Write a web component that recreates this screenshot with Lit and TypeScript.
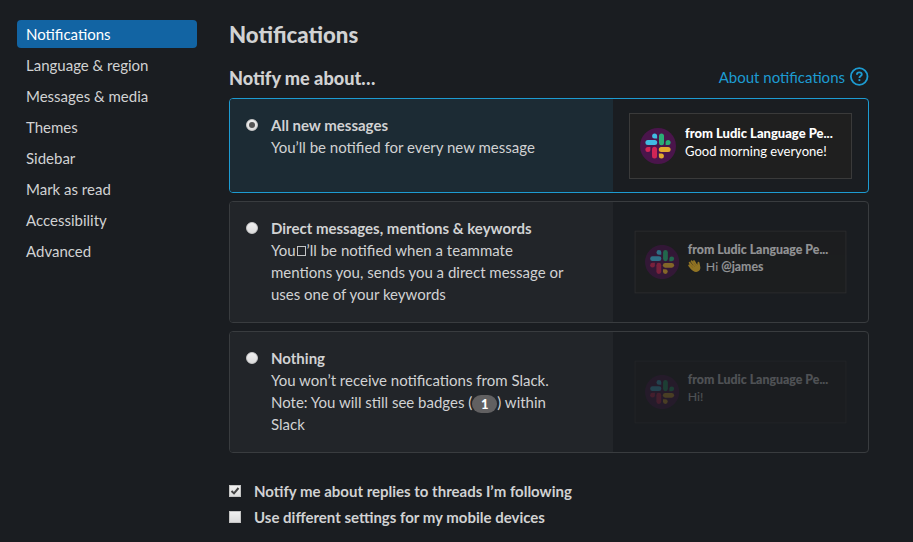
import { LitElement, html, css, svg, nothing } from "lit";
import { customElement, property } from "lit/decorators.js";
import { classMap } from "lit/directives/class-map.js";

const NAV = [
  "Notifications",
  "Language & region",
  "Messages & media",
  "Themes",
  "Sidebar",
  "Mark as read",
  "Accessibility",
  "Advanced",
];

const hashLobe = (turn: number, color: string) => svg`
  <g transform="rotate(${turn} 18 18)" fill=${color}>
    <rect x="19" y="5.4" width="5" height="11.8" rx="2.5"></rect>
    <path d="M25.6 17.1v-2.5a2.5 2.5 0 1 1 2.5 2.5z"></path>
  </g>`;

const logo = html`
  <svg class="logo" viewBox="0 0 36 36" aria-hidden="true">
    <circle cx="18" cy="18" r="18" fill="#4a154b"></circle>
    ${hashLobe(0, "#2bac76")}${hashLobe(90, "#e3aa2f")}
    ${hashLobe(180, "#d02556")}${hashLobe(270, "#41bbe2")}
  </svg>`;

const wave = html`
  <svg class="wave" viewBox="0 0 14 14" aria-hidden="true">
    <path d="M4 9.8 1.5 6.6M5.2 8 2 3.8M7 6.6 4 2.2M8.6 5.8 6.6 2.2" stroke="#ffc526" stroke-width="2.1" stroke-linecap="round"></path>
    <path d="M3 8 8.3 4.2 10 6 10.3 3.6c.2-1.2 1.8-1.1 2 .1l.9 4.6c.4 2.8-1.6 5.2-4.4 5.2-2.3 0-4-1.2-5.2-3z" fill="#ffc526"></path>
    <path d="M3.2 6.4 5.2 8.8M4.6 4.9 7.2 7.8M6.4 3.8 8.8 6.8" stroke="#c98a10" stroke-width=".5" stroke-linecap="round"></path>
  </svg>`;

@customElement("toast-preview")
class ToastPreview extends LitElement {
  static styles = css`
    :host { display: block; }
    .toast {
      box-sizing: border-box; width: 223px; height: 66px; display: flex; gap: 9px;
      padding: 10px; border: 1px solid #3a3a3a; background: #1f1f1f; color: #fff;
    }
    .logo { width: 36px; height: 36px; flex: none; margin-top: 4px; }
    .body { font-size: 13px; line-height: 18px; white-space: nowrap; }
    .from { font-weight: 900; }
    .body ::slotted(*) { display: block; }
  `;
  render() {
    return html`<div class="toast">${logo}
      <div class="body"><div class="from">from Ludic Language Pe...</div><slot></slot></div>
    </div>`;
  }
}

@customElement("choice-card")
class ChoiceCard extends LitElement {
  @property() heading = "";
  @property({ type: Boolean }) checked = false;
  static styles = css`
    :host { display: block; }
    .card {
      box-sizing: border-box; display: grid; grid-template-columns: 383px 1fr;
      min-height: 122px; border: 1px solid #393c3f; border-radius: 4px; overflow: hidden;
    }
    .card.on { min-height: 95px; border-color: #1d9bd1; }
    .main { display: flex; gap: 13px; padding: 15px 45px 16px 16px; background: #222529; }
    .on .main { background: #1c2b34; }
    .radio {
      box-sizing: border-box; flex: none; width: 12px; height: 12px; margin-top: 5px; border-radius: 50%;
      background: linear-gradient(#f0f0f0, #dcdcdc); border: 1px solid #c9c9c9;
      display: grid; place-items: center;
    }
    .dot { width: 6px; height: 6px; border-radius: 50%; background: #555; }
    .title { font-weight: 700; }
    .side { display: grid; place-items: center; }
  `;
  render() {
    return html`<div class=${classMap({ card: true, on: this.checked })}>
      <div class="main">
        <div class="radio">${this.checked ? html`<div class="dot"></div>` : nothing}</div>
        <div><div class="title">${this.heading}</div><slot></slot></div>
      </div>
      <div class="side"><slot name="preview"></slot></div>
    </div>`;
  }
}

@customElement("app-root")
class AppRoot extends LitElement {
  static styles = css`
    :host {
      box-sizing: border-box; display: flex; gap: 32px; height: 542px; overflow: hidden;
      padding: 20px 44px 0 17px; background: #1a1d21; color: #d1d2d3;
      font: 15px/22px Lato, "Liberation Sans", sans-serif;
    }
    nav { width: 180px; display: flex; flex-direction: column; gap: 3px; }
    .item { height: 28px; line-height: 29px; padding-left: 9px; border-radius: 4px; }
    .item.active { background: #1264a3; color: #fff; }
    main { width: 640px; }
    h1 { margin: 0; font-size: 22.2px; line-height: 30px; font-weight: 900; }
    .bar { display: flex; justify-content: space-between; align-items: center; height: 28px; margin-top: 13px; }
    h2 { margin: 2px 0 0; font-size: 18.1px; line-height: 26px; font-weight: 900; }
    .about { display: flex; align-items: center; gap: 5px; color: #1d9bd1; margin-top: -1px; }
    .help { width: 19px; height: 19px; }
    .cards { display: flex; flex-direction: column; gap: 8px; margin-top: 7px; }
    .missing { display: inline-block; box-sizing: border-box; width: 9px; height: 10px; border: 1px solid #c4c5c6; margin: 0 1px; }
    .badge {
      display: inline-block; width: 25px; height: 18px; border-radius: 9px; background: #616061; color: #fff;
      font-size: 13px; line-height: 18px; font-weight: 900; text-align: center; vertical-align: -1px;
    }
    .small { transform: scale(0.95); }
    .mid { opacity: 0.52; }
    .faint { opacity: 0.23; }
    .wave { width: 14px; height: 14px; margin-right: 5px; vertical-align: -1px; fill: none; }
    .checks { display: flex; flex-direction: column; gap: 4px; margin-top: 27px; font-weight: 700; }
    .check { display: flex; gap: 13px; }
    .box {
      box-sizing: border-box; width: 12px; height: 12px; margin-top: 5px; flex: none;
      background: linear-gradient(#f0f0f0, #dcdcdc); border: 1px solid #c4c4c4;
    }
    .tick { display: block; width: 10px; height: 10px; }
  `;
  render() {
    return html`
      <nav>${NAV.map((n, i) => html`<div class=${classMap({ item: true, active: i === 0 })}>${n}</div>`)}</nav>
      <main>
        <h1>Notifications</h1>
        <div class="bar">
          <h2>Notify me about…</h2>
          <div class="about">About notifications
            <svg class="help" viewBox="0 0 19 19" fill="none" stroke="#1d9bd1" stroke-width="1.8">
              <circle cx="9.2" cy="9.5" r="8.3"></circle>
              <path d="M6.9 7.7C6.9 6.2 8 5.4 9.3 5.4s2.5.8 2.5 2c0 1.6-2.4 1.6-2.4 3.5"></path>
              <path d="M9.4 12.2v1.9"></path>
            </svg>
          </div>
        </div>
        <div class="cards">
          <choice-card heading="All new messages" checked>
            You’ll be notified for every new message
            <toast-preview slot="preview"><div>Good morning everyone!</div></toast-preview>
          </choice-card>
          <choice-card heading="Direct messages, mentions & keywords">
            You<span class="missing"></span>’ll be notified when a teammate mentions you, sends you a direct message or uses one of your keywords
            <toast-preview class="small mid" slot="preview"><div>${wave}Hi <b>@james</b></div></toast-preview>
          </choice-card>
          <choice-card heading="Nothing">
            You won’t receive notifications from Slack. Note: You will still see badges (<span class="badge">1</span>) within Slack
            <toast-preview class="small faint" slot="preview"><div>Hi!</div></toast-preview>
          </choice-card>
        </div>
        <div class="checks">
          <div class="check"><div class="box">
            <svg class="tick" viewBox="0 0 10 10" fill="none" stroke="#444" stroke-width="2"><path d="M1.5 5 4 7.4 8.5 2"></path></svg>
          </div>Notify me about replies to threads I’m following</div>
          <div class="check"><div class="box"></div>Use different settings for my mobile devices</div>
        </div>
      </main>`;
  }
}
